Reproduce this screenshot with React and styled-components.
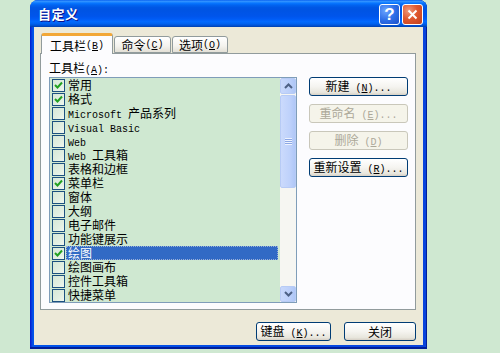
import React, { useState } from "react";
import styled, { createGlobalStyle } from "styled-components";

const GlobalStyle = createGlobalStyle`
  html, body {
    margin: 0;
    padding: 0;
    background: #cfe8d1;
  }
  body {
    font-family: "Noto Sans CJK SC", "Liberation Sans", sans-serif;
    font-size: 12px;
    color: #000;
  }
`;

const toolbars = [
  { name: "常用", on: true },
  { name: "格式", on: true },
  { name: "Microsoft 产品系列" },
  { name: "Visual Basic" },
  { name: "Web" },
  { name: "Web 工具箱" },
  { name: "表格和边框" },
  { name: "菜单栏", on: true },
  { name: "窗体" },
  { name: "大纲" },
  { name: "电子邮件" },
  { name: "功能键展示" },
  { name: "绘图", on: true },
  { name: "绘图画布" },
  { name: "控件工具箱" },
  { name: "快捷菜单" },
];

const sideButtons = [
  { label: "新建 (&N)..." },
  { label: "重命名 (&E)...", disabled: true },
  { label: "删除 (&D)", disabled: true },
  { label: "重新设置 (&R)..." },
];

// ascii runs in the old SimSun look: half-width mono
const Text = ({ s }) =>
  s.split(/([\x00-\x7f]+)/).map((part, i) =>
    /[\x00-\x7f]/.test(part) ? <Latin key={i}>{part}</Latin> : part
  );

const Label = ({ text }) =>
  text.split(/(&.)/).map((p, i) =>
    p.startsWith("&") ? (
      <Key key={i}>
        <Latin>{p[1]}</Latin>
      </Key>
    ) : (
      <Text key={i} s={p} />
    )
  );

const Check = () => (
  <svg width="9" height="9" viewBox="0 0 9 9">
    <path d="M1 4 L3.5 6.5 L8 1.5" fill="none" stroke="#21a121" strokeWidth="2" />
  </svg>
);

const Arrow = ({ up }) => (
  <svg width="9" height="6" viewBox="0 0 9 6">
    <path
      d={up ? "M1 5 L4.5 1.5 L8 5" : "M1 1 L4.5 4.5 L8 1"}
      fill="none"
      stroke="#4d6185"
      strokeWidth="2"
    />
  </svg>
);

export default function App() {
  const [items, setItems] = useState(toolbars);
  const [selected, setSelected] = useState(12);
  const [tab, setTab] = useState(0);

  const toggle = (index) => {
    const next = [...items];
    next[index] = { ...next[index], on: !next[index].on };
    setItems(next);
  };

  return (
    <>
      <GlobalStyle />
      <Page>
        <Window>
          <TitleBar>
            <Title>自定义</Title>
            <TitleButtons>
              <CaptionButton $kind="help">?</CaptionButton>
              <CaptionButton $kind="close">
                <svg width="11" height="11" viewBox="0 0 11 11">
                  <path d="M1.5 1.5 L9.5 9.5 M9.5 1.5 L1.5 9.5" stroke="#fff" strokeWidth="2" />
                </svg>
              </CaptionButton>
            </TitleButtons>
          </TitleBar>
          <Client>
            <TabStrip>
              {["工具栏 (&B)", "命令 (&C)", "选项 (&O)"].map((t, i) => (
                <Tab key={i} $active={tab === i} $w={[72, 57, 56][i]} onClick={() => setTab(i)}>
                  <Label text={t} />
                </Tab>
              ))}
            </TabStrip>
            <Panel>
              <FieldLabel>
                <Label text="工具栏(&A):" />
              </FieldLabel>
              <PanelBody>
                <ListBox>
                  <Items>
                    {items.map((it, index) => (
                      <Row key={index} onClick={() => setSelected(index)}>
                        <CheckBox
                          onClick={(e) => {
                            e.stopPropagation();
                            toggle(index);
                          }}
                        >
                          {it.on && <Check />}
                        </CheckBox>
                        <RowText $selected={selected === index}>
                          <Text s={it.name} />
                        </RowText>
                      </Row>
                    ))}
                  </Items>
                  <ScrollBar>
                    <ScrollArrow>
                      <Arrow up />
                    </ScrollArrow>
                    <Track>
                      <Thumb>
                        <Grip />
                      </Thumb>
                    </Track>
                    <ScrollArrow>
                      <Arrow />
                    </ScrollArrow>
                  </ScrollBar>
                </ListBox>
                <SideButtons>
                  {sideButtons.map((b, i) => (
                    <Button key={i} disabled={b.disabled} $w={99}>
                      <Label text={b.label} />
                    </Button>
                  ))}
                </SideButtons>
              </PanelBody>
            </Panel>
            <Footer>
              <Button $w={75}>
                <Label text="键盘 (&K)..." />
              </Button>
              <Button $w={72}>关闭</Button>
            </Footer>
          </Client>
        </Window>
      </Page>
    </>
  );
}

const Page = styled.div`
  width: 500px;
  height: 353px;
  padding-left: 30px;
  box-sizing: border-box;
  overflow: hidden;
`;

const Window = styled.div`
  width: 397px;
  height: 349px;
  box-sizing: border-box;
  display: flex;
  flex-direction: column;
  background: linear-gradient(to right, #0019cf 0, #0842e0 2px, #0055ea 3px, #0844dc 100%);
  padding: 0 4px 4px;
  border-radius: 8px 8px 0 0;
  box-shadow: inset 0 -2px 0 #001e9a, inset -1px 0 0 #001e9a;
  overflow: hidden;
`;

const TitleBar = styled.div`
  height: 27px;
  margin: 0 -4px;
  padding: 0 4px 0 8px;
  display: flex;
  align-items: center;
  justify-content: space-between;
  background: linear-gradient(
    to bottom,
    #0058ee 0%,
    #3593ff 4%,
    #288eff 7%,
    #127dff 10%,
    #036ffc 14%,
    #0262ee 20%,
    #0057e5 28%,
    #0054e3 36%,
    #0055eb 60%,
    #005bf5 70%,
    #026afe 80%,
    #0062ef 88%,
    #0052d6 94%,
    #0040ab 100%
  );
`;

const Title = styled.div`
  color: #fff;
  font-weight: bold;
  font-size: 13px;
  letter-spacing: 0.5px;
  text-shadow: 1px 1px 0 #0f1089;
`;

const TitleButtons = styled.div`
  display: flex;
  gap: 2px;
  padding-top: 1px;
`;

const CaptionButton = styled.div`
  width: 21px;
  height: 21px;
  box-sizing: border-box;
  border: 1px solid #fff;
  border-radius: 3px;
  display: flex;
  align-items: center;
  justify-content: center;
  color: #fff;
  font-family: "Liberation Sans", sans-serif;
  font-weight: bold;
  font-size: 17px;
  line-height: 19px;
  background: ${(p) =>
    p.$kind === "close"
      ? "radial-gradient(circle at 30% 30%, #f09a7c 0%, #e0582f 45%, #c0401e 100%)"
      : "radial-gradient(circle at 30% 30%, #6aa4ff 0%, #2f6fe8 50%, #1b4fc8 100%)"};
`;

const Client = styled.div`
  flex: 1;
  display: flex;
  flex-direction: column;
  background: #ece9d8;
  padding: 6px 7px 0 6px;
`;

const TabStrip = styled.div`
  display: flex;
  align-items: flex-end;
  gap: 1px;
  height: 20px;
  padding-left: 1px;
`;

const Tab = styled.div`
  position: relative;
  z-index: ${(p) => (p.$active ? 2 : 1)};
  width: ${(p) => p.$w}px;
  height: ${(p) => (p.$active ? 21 : 17)}px;
  margin-bottom: ${(p) => (p.$active ? -1 : 0)}px;
  box-sizing: border-box;
  display: flex;
  align-items: center;
  justify-content: center;
  padding-top: ${(p) => (p.$active ? 1 : 0)}px;
  line-height: 14px;
  border: 1px solid #919b9c;
  border-bottom: ${(p) => (p.$active ? "none" : "1px solid #919b9c")};
  border-top: ${(p) => (p.$active ? "3px solid #f2a737" : "1px solid #919b9c")};
  border-radius: 3px 3px 0 0;
  background: ${(p) =>
    p.$active ? "#fcfcfe" : "linear-gradient(to bottom, #ffffff 0%, #f4f3ee 60%, #e3e0d6 100%)"};
  cursor: default;
  white-space: nowrap;
`;

const Panel = styled.div`
  width: 376px;
  height: 257px;
  box-sizing: border-box;
  border: 1px solid #919b9c;
  background: #fcfcfe;
  padding: 7px 7px 0 8px;
`;

const FieldLabel = styled.div`
  height: 16px;
  line-height: 13px;
`;

const PanelBody = styled.div`
  display: flex;
  gap: 12px;
  align-items: flex-start;
`;

const ListBox = styled.div`
  width: 248px;
  height: 226px;
  box-sizing: border-box;
  border: 1px solid #7f9db9;
  background: #cfe8d1;
  display: flex;
`;

const Items = styled.div`
  flex: 1;
  display: flex;
  flex-direction: column;
  padding-right: 2px;
`;

const Row = styled.div`
  height: 14px;
  display: flex;
  align-items: center;
  padding-left: 2px;
  white-space: nowrap;
  line-height: 14px;
`;

const CheckBox = styled.div`
  width: 13px;
  height: 13px;
  flex: none;
  box-sizing: border-box;
  border: 1px solid #1c5180;
  background: linear-gradient(135deg, #d6e8d7 0%, #e2efe2 60%, #f0f7f0 100%);
  display: flex;
  align-items: center;
  justify-content: center;
`;

const RowText = styled.div`
  flex: 1;
  height: 14px;
  margin-left: 1px;
  padding-left: 2px;
  box-sizing: border-box;
  line-height: 14px;
  background: ${(p) => (p.$selected ? "#316ac5" : "transparent")};
  color: ${(p) => (p.$selected ? "#fff" : "#000")};
  outline: ${(p) => (p.$selected ? "1px dotted #9ab0d8" : "none")};
  outline-offset: -1px;
`;

const ScrollBar = styled.div`
  width: 16px;
  display: flex;
  flex-direction: column;
  background: #f6f6f2;
`;

const ScrollArrow = styled.div`
  height: 16px;
  box-sizing: border-box;
  border: 1px solid #b7cbf5;
  border-radius: 2px;
  background: linear-gradient(to right, #c8d8fb 0%, #bcd0fa 60%, #aec6f6 100%);
  display: flex;
  align-items: center;
  justify-content: center;
`;

const Track = styled.div`
  flex: 1;
  padding-top: 1px;
`;

const Thumb = styled.div`
  height: 93px;
  box-sizing: border-box;
  border: 1px solid #b7cbf5;
  border-radius: 2px;
  background: linear-gradient(to right, #cbdafc 0%, #bfd2fb 60%, #b0c7f7 100%);
  display: flex;
  align-items: center;
  justify-content: center;
`;

const Grip = styled.div`
  width: 7px;
  height: 7px;
  background: repeating-linear-gradient(to bottom, #eef3fe 0 1px, #8ca7e4 1px 2px);
`;

const SideButtons = styled.div`
  display: flex;
  flex-direction: column;
  gap: 8px;
`;

const Button = styled.button`
  width: ${(p) => p.$w}px;
  height: 19px;
  box-sizing: border-box;
  padding: 0;
  border: 1px solid ${(p) => (p.disabled ? "#c9c7ba" : "#003c74")};
  border-radius: 3px;
  font-family: inherit;
  font-size: 12px;
  line-height: 15px;
  color: ${(p) => (p.disabled ? "#aca899" : "#000")};
  background: ${(p) =>
    p.disabled
      ? "#f5f4ea"
      : "linear-gradient(to bottom, #ffffff 0%, #f5f4f0 50%, #e8e6dd 85%, #d6d0c5 100%)"};
  white-space: nowrap;
  cursor: default;
`;

const Footer = styled.div`
  display: flex;
  justify-content: flex-end;
  gap: 13px;
  padding-top: 12px;
`;

const Latin = styled.span`
  font-family: "Liberation Mono", monospace;
  font-size: 10px;
  line-height: inherit;
`;

const Key = styled.span`
  text-decoration: underline;
`;
